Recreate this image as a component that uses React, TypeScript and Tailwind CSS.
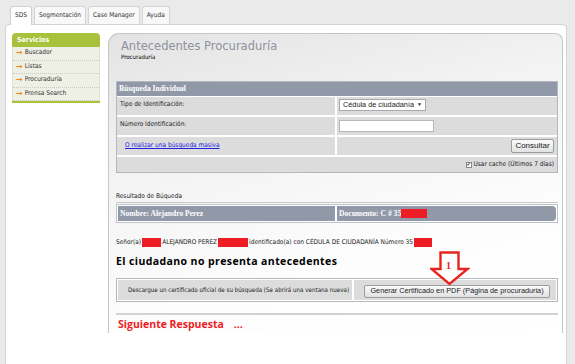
import React from "react";

const tabs = ["SDS", "Segmentación", "Case Manager", "Ayuda"];
const menu = ["Buscador", "Listas", "Procuraduría", "Prensa Search"];

function Redacted({ w }: { w: number }) {
  return <span className="inline-block h-[9px] bg-[#ee1c25] align-middle" style={{ width: w }} />;
}

function RedArrow() {
  return (
    <div className="absolute left-[430px] top-[251px] w-[40px] h-[35px]">
      <svg width="40" height="35" viewBox="0 0 40 35">
        <path
          d="M10.5 1.5 H28.5 V18 H37.5 L19.5 33 L1.5 18 H10.5 Z"
          fill="#ffffff"
          stroke="#e8231f"
          strokeWidth="2.4"
          strokeLinejoin="miter"
        />
      </svg>
      <span className="absolute left-[16px] top-[10px] text-[10px] font-bold leading-none text-[#e8231f] [font-family:'Liberation_Serif',serif]">
        1
      </span>
    </div>
  );
}

export default function App() {
  return (
    <div className="relative w-[575px] h-[364px] overflow-hidden bg-[#eaeaea] [font-family:'DejaVu_Sans_Condensed','DejaVu_Sans',sans-serif] text-[6.5px] text-[#222]">
      {/* Tabs */}
      <div className="flex items-end gap-[2px] pl-[10px] pt-[5px] h-[24px]">
        {tabs.map((t, i) => (
          <div
            key={t}
            className={
              i === 0
                ? "relative z-10 h-[19px] -mb-px px-[4px] flex items-center bg-white border border-b-0 border-[#d0d0d0] rounded-t-[3px] text-[6.5px] text-[#333]"
                : "h-[18px] px-[4px] flex items-center bg-[#f8f8f8] border border-b-0 border-[#d4d4d4] rounded-t-[3px] text-[6.5px] text-[#333]"
            }
          >
            {t}
          </div>
        ))}
      </div>

      {/* Outer container */}
      <div className="relative ml-[5px] w-[562px] h-[345px] bg-white border border-[#d4d4d4] rounded-tl-[4px] rounded-tr-[5px] flex pl-[6px] pt-[8px]">
        {/* Sidebar */}
        <div className="w-[88px] shrink-0">
          <div className="h-[14px] bg-[#a8c23c] rounded-t-[4px] flex items-center pl-[5px] text-white font-bold text-[7px]">
            Servicios
          </div>
          <div className="bg-[#eef0e6] border-x border-[#dfe5cc]">
            {menu.map((m) => (
              <div key={m} className="h-[13.5px] flex items-center pl-[3px] border-b border-dotted border-[#c9c9c0] text-[#333]">
                <span className="text-[#f08a1c] text-[8px] leading-none mr-[2px] font-bold [font-family:'DejaVu_Sans',sans-serif]">→</span>
                {m}
              </div>
            ))}
          </div>
          <div className="h-[2px] bg-[#a8c23c]" />
        </div>

        {/* Main panel */}
        <div className="ml-[8px] w-[455px] h-[300px] border border-b-0 border-[#c6c6c6] rounded-tl-[11px] rounded-tr-[8px] bg-[linear-gradient(165deg,#e3e3e3_0%,#f3f3f3_35%,#fdfdfd_70%,#ffffff_100%)] pl-[7px] pr-[4px] pt-[5px]">
          <div className="pl-[5px] text-[11.5px] leading-[14px] text-[#8d929c] [font-family:'DejaVu_Sans',sans-serif]">
            Antecedentes Procuraduría
          </div>
          <div className="pl-[5px] text-[6px] leading-[8px] text-black">Procuraduría</div>

          {/* Búsqueda individual */}
          <div className="mt-[20px] border border-[#b3b7be] bg-white">
            <div className="h-[14px] bg-[#9199a9] flex items-center pl-[2px] text-white font-bold text-[7.5px] [font-family:'Liberation_Serif',serif]">
              Búsqueda Individual
            </div>
            <div className="grid grid-cols-[218px_1fr] gap-[2px] pt-[1px]">
              <div className="h-[18px] bg-[#dcdcdc] pl-[3px] pt-[3px]">Tipo de Identificación:</div>
              <div className="h-[18px] bg-[#dcdcdc] pl-[2px] pt-[2px]">
                <div className="w-[87px] h-[12px] bg-white border border-[#a9a9a9] flex items-center justify-between px-[3px] text-[7.3px] text-[#222] [font-family:'Liberation_Sans',sans-serif]">
                  <span>Cédula de ciudadanía</span>
                  <span className="text-[5px]">▼</span>
                </div>
              </div>
              <div className="h-[18px] bg-[#dcdcdc] pl-[3px] pt-[3px]">Número Identificación:</div>
              <div className="h-[18px] bg-[#dcdcdc] pl-[2px] pt-[3px]">
                <div className="w-[95px] h-[12px] bg-white border border-[#b8b8b8]" />
              </div>
              <div className="h-[18px] bg-[#dcdcdc] pl-[8px] flex items-center">
                <span className="text-[#2222dd] underline">O realizar una búsqueda masiva</span>
              </div>
              <div className="h-[18px] bg-[#dcdcdc] flex items-center justify-end pr-[3px]">
                <div className="w-[43px] h-[14px] flex items-center justify-center border border-[#9c9c9c] rounded-[2px] bg-[linear-gradient(#fafafa,#e2e2e2)] text-[8px] text-[#222] [font-family:'Liberation_Sans',sans-serif]">
                  Consultar
                </div>
              </div>
              <div className="col-span-2 h-[15px] bg-[#dcdcdc] flex items-center justify-end pr-[3px] gap-[2px]">
                <span className="w-[6px] h-[6px] bg-white border border-[#888] flex items-center justify-center text-[5px] leading-none">✔</span>
                <span>Usar cache (Últimos 7 días)</span>
              </div>
            </div>
          </div>

          {/* Resultado */}
          <div className="mt-[19px] leading-[8px]">Resultado de Búqueda</div>
          <div className="mt-[2px] border-t border-[#c8c8c8] pt-[1px]">
            <div className="border border-[#bfc2c8] p-[1px] flex gap-[2px] bg-white">
              <div className="w-[217px] h-[15px] bg-[#9199a9] flex items-center pl-[2px] text-white font-bold text-[7.6px] [font-family:'Liberation_Serif',serif]">
                Nombre: Alejandro Perez
              </div>
              <div className="flex-1 h-[15px] bg-[#9199a9] rounded-r-[4px] flex items-center pl-[2px] text-white font-bold text-[7.6px] [font-family:'Liberation_Serif',serif]">
                Documento: C # 35
                <span className="inline-block w-[26px] h-[9px] bg-[#ee1c25]" />
              </div>
            </div>
          </div>

          <div className="mt-[15px] leading-[9px] flex items-center gap-[1px] whitespace-nowrap">
            <span>Señor(a)</span>
            <Redacted w={19} />
            <span>ALEJANDRO PEREZ</span>
            <Redacted w={30} />
            <span>identificado(a) con CÉDULA DE CIUDADANÍA Número 35</span>
            <Redacted w={18} />
          </div>

          <div className="mt-[7px] text-[10.5px] tracking-[0.4px] font-bold text-black leading-[14px] [font-family:'Open_Sans',sans-serif]">
            El ciudadano no presenta antecedentes
          </div>

          {/* Certificado */}
          <div className="mt-[10px] border border-[#b3b7be] p-[1px] flex gap-[2px] bg-white">
            <div className="w-[234px] h-[20px] bg-[#dcdcdc] flex items-center pl-[10px] text-[6.2px]">
              Descargue un certificado oficial de su búsqueda (Se abrirá una ventana nueva)
            </div>
            <div className="flex-1 h-[20px] bg-[#dcdcdc] flex items-end pb-[2px] pl-[10px]">
              <div className="w-[186px] h-[13px] flex items-center justify-center border border-[#9c9c9c] rounded-[2px] bg-[linear-gradient(#fafafa,#e2e2e2)] text-[7.3px] text-[#222] [font-family:'Liberation_Sans',sans-serif] whitespace-nowrap">
                Generar Certificado en PDF (Página de procuraduria)
              </div>
            </div>
          </div>

          <div className="mt-[11px] h-[2px] bg-[#d2d2d2]" />
          <div className="mt-[3px] pl-[2px] flex items-end text-[10.5px] font-bold text-[#ee1c25] leading-[13px] [font-family:'Open_Sans',sans-serif]">
            <span>Siguiente Respuesta</span>
            <span className="ml-[10px]">...</span>
          </div>
        </div>
      </div>

      <RedArrow />
    </div>
  );
}
